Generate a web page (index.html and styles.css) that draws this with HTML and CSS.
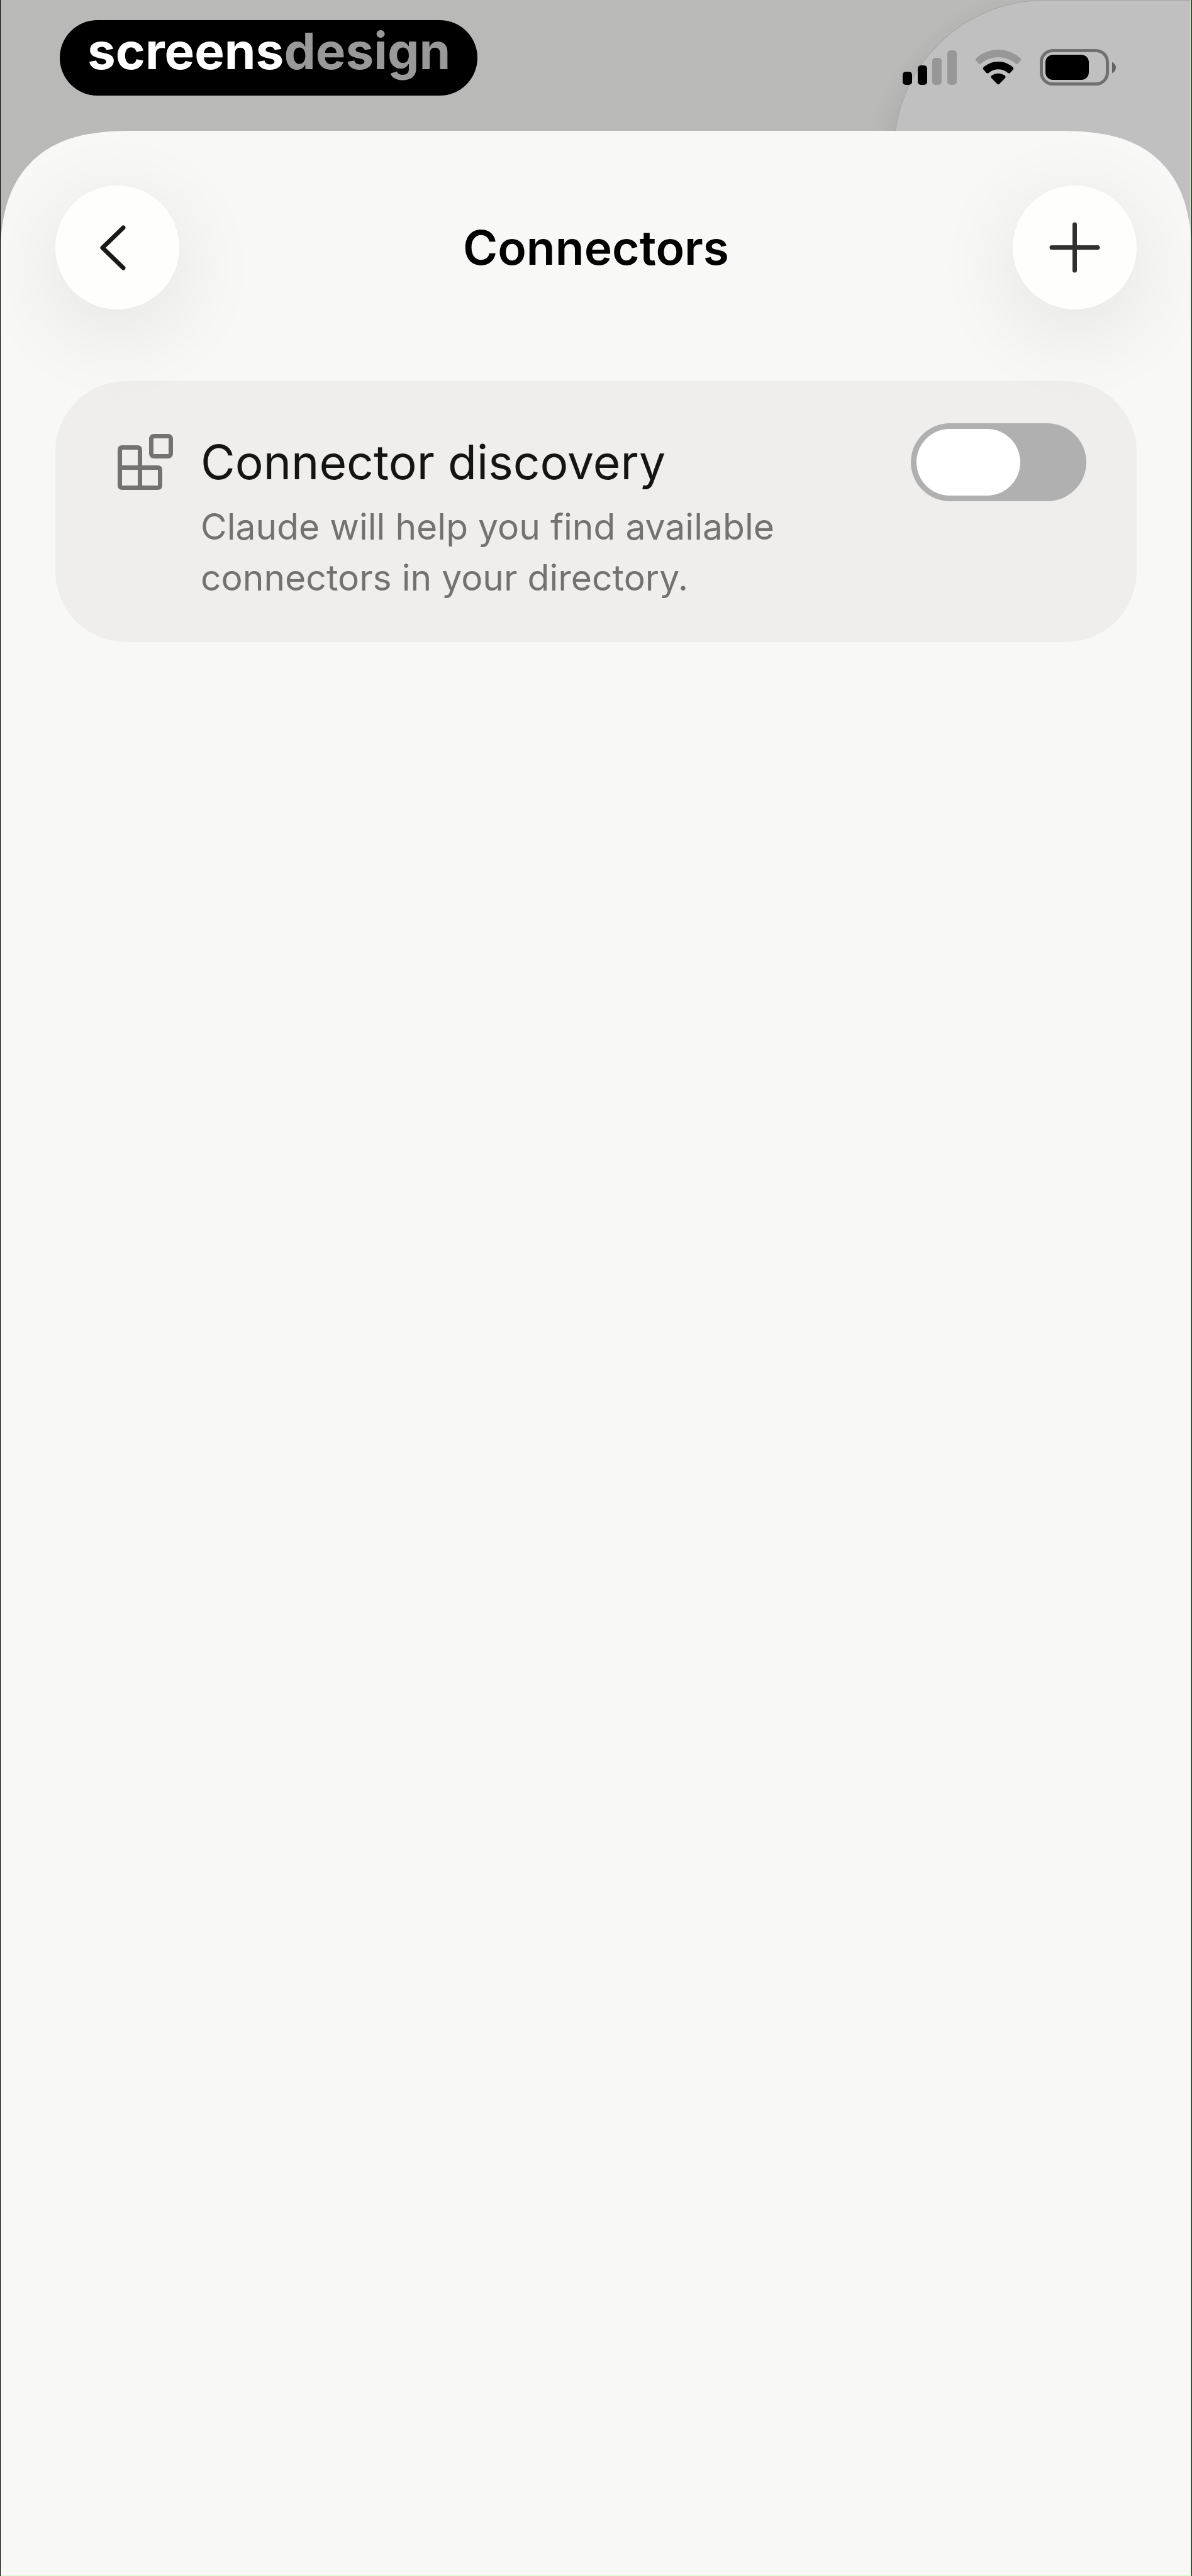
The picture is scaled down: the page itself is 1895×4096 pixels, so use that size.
FILE: index.html
```html
<!DOCTYPE html>
<html lang="en">
<head>
<meta charset="utf-8">
<title>Connectors</title>
<link rel="stylesheet" href="styles.css">
</head>
<body>
<div class="screen">
  <div class="backdrop"></div>
  <div class="status">
    <div class="brand"><span>screens</span><span class="brand-dim">design</span></div>
    <div class="status-icons">
      <svg width="86" height="55" viewBox="0 0 86 55" aria-hidden="true">
        <rect x="0" y="34" width="15" height="21" rx="5"/>
        <rect x="24" y="24" width="15" height="31" rx="5"/>
        <rect x="47" y="12" width="15" height="43" rx="5" fill="#979797"/>
        <rect x="71" y="0" width="15" height="55" rx="5" fill="#979797"/>
      </svg>
      <svg width="74" height="56" viewBox="0 0 74 56" aria-hidden="true">
        <path d="M2 13.500Q0 15.500 1.600 17.500L5.600 22Q7.400 23.700 9.400 22.200C25 8.500 49 8.500 64.600 22.200Q66.600 23.700 68.400 22L72.400 17.500Q74 15.500 72 13.500C52 -4.500 22 -4.500 2 13.500Z" fill="#979797"/>
        <path d="M13.300 28.200Q12 30 13.500 31.700L18.300 36.900Q20 38.300 22 36.700C31 29.500 43 29.500 52 36.700Q54 38.300 55.700 36.900L60.500 31.700Q62 30 60.700 28.200C47 15.800 27 15.800 13.300 28.200Z"/>
        <path d="M26 41.600Q24.600 43.300 26 45L35.300 54.500Q37 56 38.700 54.500L48 45Q49.400 43.300 48 41.600C41.500 36.400 32.500 36.400 26 41.600Z"/>
      </svg>
      <svg width="121" height="58" viewBox="0 0 121 58" aria-hidden="true">
        <rect x="2.500" y="2.500" width="105" height="53" rx="18" fill="none" stroke="#707070" stroke-width="5"/>
        <rect x="9" y="9" width="69" height="40" rx="12"/>
        <path d="M115 20.500Q121 24 121 29.500Q121 35 115 38.500Z" fill="#636363"/>
      </svg>
    </div>
  </div>
  <main class="sheet">
    <header class="bar">
      <button class="round" type="button" aria-label="Back">
        <svg width="197" height="197" viewBox="0 0 197 197" fill="none" stroke="#191918" stroke-width="7" stroke-linecap="round" stroke-linejoin="round" aria-hidden="true"><path d="M108 67L75 99L108 131"/></svg>
      </button>
      <h1 class="title">Connectors</h1>
      <button class="round" type="button" aria-label="Add connector">
        <svg width="197" height="197" viewBox="0 0 197 197" fill="none" stroke="#30302e" stroke-width="7" stroke-linecap="round" aria-hidden="true"><path d="M98.500 62V135M62 98.500H135"/></svg>
      </button>
    </header>
    <section class="card">
      <svg class="blocks" width="88" height="89" viewBox="0 0 88 89" fill="none" stroke="#73726f" stroke-width="7" aria-hidden="true">
        <path d="M35.500 53.500V25.500Q35.500 21.500 31.500 21.500H7.500Q3.500 21.500 3.500 25.500V81.500Q3.500 85.500 7.500 85.500H63.500Q67.500 85.500 67.500 81.500V57.500Q67.500 53.500 63.500 53.500H3.500M35.500 53.500V85.500"/>
        <rect x="53.500" y="3.500" width="31" height="32" rx="4"/>
      </svg>
      <div class="copy">
        <label class="name" for="discovery">Connector discovery</label>
        <p class="note" id="discovery-note">Claude will help you find available connectors in your directory.</p>
      </div>
      <input class="switch" type="checkbox" role="switch" id="discovery" aria-describedby="discovery-note">
    </section>
  </main>
</div>
</body>
</html>
```
FILE: styles.css
```css
* {
  box-sizing: border-box;
}

body {
  margin: 0;
  font-family: Inter, "Liberation Sans", sans-serif;
}

.screen {
  position: relative;
  display: flex;
  flex-direction: column;
  min-height: 100vh;
  overflow: hidden;
  background: #b9b9b7;
}

/* thin frame drawn over the whole screen */
.screen::after {
  content: "";
  position: absolute;
  inset: 0;
  border: solid #000;
  border-width: 0 1px;
  box-shadow: inset -2px -2px 0 rgba(200, 255, 190, 0.6);
  pointer-events: none;
}

.backdrop {
  position: absolute;
  top: 0;
  right: 0;
  width: 474px;
  height: 480px;
  border: solid #a6a6a5;
  border-width: 1px 0 0 1px;
  border-top-left-radius: 240px;
  background: #c0c0c0;
  box-shadow: 0 24px 48px rgba(0, 0, 0, 0.12);
}

.status {
  position: relative;
  display: flex;
  justify-content: space-between;
  align-items: flex-start;
  height: 208px;
  padding: 32px 121px 0 95px;
}

.brand {
  height: 120px;
  padding: 0 43px 0 44px;
  border-radius: 60px;
  background: #000;
  color: #fff;
  font-size: 80px;
  font-weight: 700;
  line-height: 98px;
}

.brand-dim {
  color: #999;
}

.status-icons {
  display: flex;
  align-items: center;
  gap: 29px;
  margin-top: 46px;
}

.sheet {
  position: relative;
  flex: 1;
  padding: 87px 88px;
  border-radius: 172px 172px 0 0;
  background: #f8f8f6;
}

/* smoother corners where the browser can draw them */
@supports (corner-shape: superellipse(1.4)) {
  .sheet {
    border-radius: 215px 215px 0 0;
    corner-shape: superellipse(1.4);
  }
}

.bar {
  display: flex;
  justify-content: space-between;
  align-items: center;
}

.round {
  width: 197px;
  height: 197px;
  padding: 0;
  border: 0;
  border-radius: 50%;
  background: #fefefd;
  box-shadow: 0 32px 128px 16px rgba(0, 0, 0, 0.07);
}

.round svg {
  display: block;
}

.title {
  margin: 0;
  color: #000;
  font-size: 75px;
  font-weight: 600;
  line-height: 96px;
}

.card {
  display: flex;
  align-items: flex-start;
  margin-top: 114px;
  padding: 67px 80px 62px 99px;
  border-radius: 112px;
  background: rgba(20, 10, 10, 0.04);
}

.blocks {
  flex: none;
  margin-top: 17px;
}

.copy {
  flex: 1;
  padding: 14px 120px 0 44px;
}

.name {
  display: block;
  color: #141413;
  font-size: 75px;
  line-height: 96px;
}

.note {
  margin: 14px 0 0;
  color: #73726e;
  font-size: 57px;
  line-height: 81px;
}

.switch {
  appearance: none;
  flex: none;
  width: 279px;
  height: 124px;
  margin: 0;
  padding: 9px;
  border-radius: 62px;
  background: #b0b0b0;
}

.switch::before {
  content: "";
  display: block;
  width: 165px;
  height: 106px;
  border-radius: 53px;
  background: #fff;
}

.switch:checked {
  background: #2c84db;
}

.switch:checked::before {
  margin-left: auto;
}
```
